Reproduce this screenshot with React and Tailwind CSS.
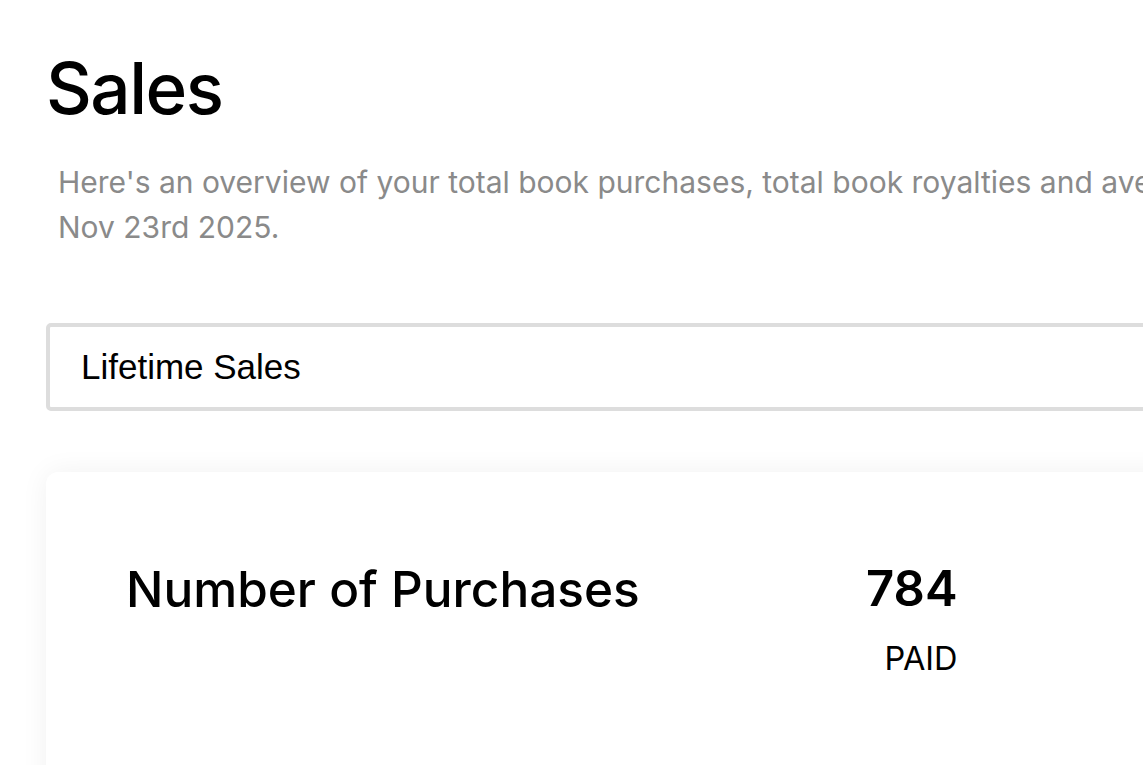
import React from 'react';

const stats = [
  { value: '784', label: 'PAID' },
  { value: '$2,941.18', label: 'ROYALTIES' },
  { value: '$3.75', label: 'AVERAGE' },
];

function StatCard({ title, items }) {
  return (
    <div className="w-[1900px] rounded-xl bg-white shadow-[0_0_28px_rgba(0,0,0,0.06)] pl-[80px] pt-[87px] pb-[140px]">
      <div className="flex items-start">
        <h2 className="w-[740px] text-[49.5px] leading-[60px] font-medium text-black">{title}</h2>
        <div className="flex gap-[260px]">
          {items.map((s) => (
            <div key={s.label} className="flex flex-col items-end">
              <span className="text-[49px] leading-[60px] font-semibold text-black">{s.value}</span>
              <span className="mt-[22px] text-[32.5px] leading-[36px] text-black">{s.label}</span>
            </div>
          ))}
        </div>
      </div>
    </div>
  );
}

export default function App() {
  return (
    <div className="w-screen h-screen overflow-hidden bg-white font-['Inter',sans-serif]">
      <div className="w-[2000px] pl-[46px] pt-[52px]">
        <h1 className="text-[71px] leading-[72px] font-medium tracking-[-1.5px] text-black">Sales</h1>
        <p className="mt-[36px] pl-[12px] text-[30px] leading-[45px] text-[#8a8a8a]">
          Here's an overview of your total book purchases, total book royalties and average royalty per book from Jan 1st 2020 to
          <br />
          Nov 23rd 2025.
        </p>
        <div className="mt-[73px] w-[1900px] h-[88px] flex items-center rounded-[5px] border-4 border-[#dddddd] bg-white pl-[31px]">
          <select className="appearance-none bg-transparent outline-none font-['Liberation_Sans',Arial,sans-serif] text-[35px] text-black">
            <option>Lifetime Sales</option>
            <option>Last 30 Days</option>
            <option>This Year</option>
          </select>
        </div>
        <div className="mt-[61px]">
          <StatCard title="Number of Purchases" items={stats} />
        </div>
      </div>
    </div>
  );
}
